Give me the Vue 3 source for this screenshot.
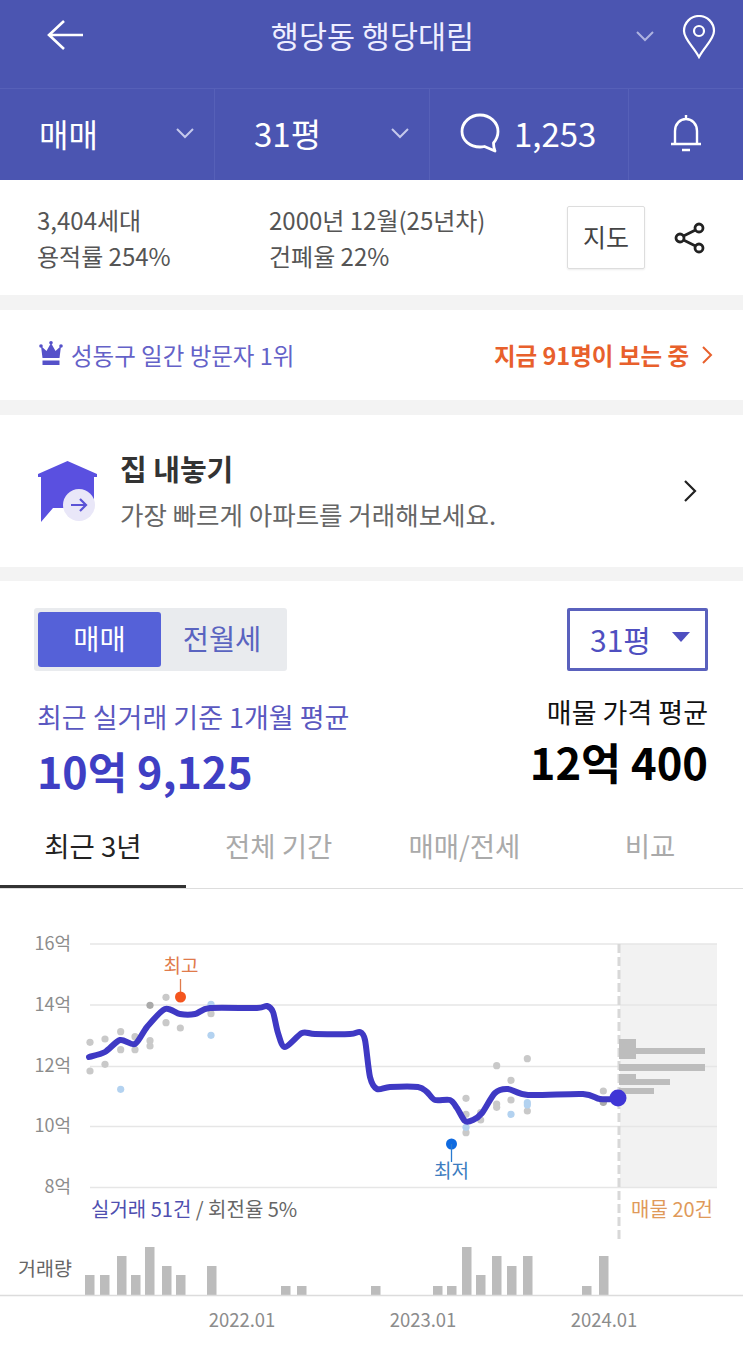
<script setup>
import { computed } from 'vue'

const linePts = [[89,1057],[105,1052],[120,1040],[135,1044],[147,1027],[165,1009],[180,1014],[195,1014],[210,1008],[257,1008],[267,1006],[273,1012],[278,1033],[285,1047],[302,1033],[315,1034],[350,1034],[360,1032],[365,1040],[370,1077],[377,1089],[390,1087],[418,1087],[427,1092],[435,1100],[450,1100],[457,1108],[465,1121],[473,1120],[482,1113],[495,1093],[508,1089],[528,1095],[583,1094],[600,1099],[618,1099]]

const linePath = computed(() => {
  const p = linePts
  let d = `M${p[0][0]} ${p[0][1]}`
  for (let i = 0; i < p.length - 1; i++) {
    const a = p[Math.max(i - 1, 0)], b = p[i], c = p[i + 1], e = p[Math.min(i + 2, p.length - 1)]
    const k = 0.14
    const c1 = [b[0] + (c[0] - a[0]) * k, b[1] + (c[1] - a[1]) * k]
    const c2 = [c[0] - (e[0] - b[0]) * k, c[1] - (e[1] - b[1]) * k]
    d += ` C${c1[0].toFixed(1)} ${c1[1].toFixed(1)} ${c2[0].toFixed(1)} ${c2[1].toFixed(1)} ${c[0]} ${c[1]}`
  }
  return d
})

const l = (x, y) => [x / 3, 920 + y / 3]
const r = (x, y) => [370 + x / 3, 920 + y / 3]
const grayDots = [
  ...[[270,367],[270,453],[315,357],[315,433],[362,335],[362,389],[405,350],[405,389],[450,362],[450,378],[498,232],[498,308],[541,324],[633,281]].map(a => l(...a)),
  ...[[288,535],[288,583],[288,638],[332,578],[332,600],[380,437],[380,552],[380,562],[423,481],[423,540],[472,416],[472,573],[700,513],[700,547]].map(a => r(...a))
]
const darkDots = [l(450,256), r(700,547)]
const blueDots = [
  ...[[362,508],[633,253],[633,346]].map(a => l(...a)),
  ...[[288,622],[423,583],[472,548],[472,555]].map(a => r(...a))
]
const grid = [944, 1005, 1066.5, 1126.5, 1187.5]
const yLabels = [['16억',944],['14억',1005],['12억',1066],['10억',1126],['8억',1187]]
const hist = [[619,1039,17,20],[636,1048,69,6],[619,1064,86,7],[619,1074,17,5],[619,1079,51,6],[619,1088,35,6]]
const vol = [[85,1275],[100,1275],[117,1256],[131,1275],[145,1247],[162,1266],[176,1275],[207,1266],[281,1286],[297,1286],[371,1286],[433,1286],[447,1286],[462,1247],[476,1275],[492,1256],[507,1266],[523,1256],[582,1286],[599,1256]]
const years = [['2022.01',242],['2023.01',423],['2024.01',604]]
const tabs = ['최근 3년', '전체 기간', '매매/전세', '비교']
</script>

<template>
  <div class="page">
    <header class="top">
      <div class="bar1">
        <svg class="back" width="38" height="32" viewBox="0 0 38 32"><path d="M18 2 3 16l15 14M3 16h34" fill="none" stroke="#fff" stroke-width="2.6"/></svg>
        <div class="title">행당동 행당대림</div>
        <svg class="chev-small" width="20" height="12" viewBox="0 0 20 12"><path d="M2 2l8 8 8-8" fill="none" stroke="#aeb3e0" stroke-width="2"/></svg>
        <svg class="pin" width="34" height="44" viewBox="0 0 34 44"><path d="M17 42C11 31 2 24 2 16a15 15 0 0 1 30 0c0 8-9 15-15 26Z" fill="none" stroke="#fff" stroke-width="2.2"/><circle cx="17" cy="16" r="5" fill="none" stroke="#fff" stroke-width="2.2"/></svg>
      </div>
      <div class="bar2">
        <div class="cell c1"><span>매매</span><svg width="20" height="12" viewBox="0 0 20 12"><path d="M2 2l8 8 8-8" fill="none" stroke="#c5c9ec" stroke-width="2"/></svg></div>
        <div class="cell c2"><span>31평</span><svg width="20" height="12" viewBox="0 0 20 12"><path d="M2 2l8 8 8-8" fill="none" stroke="#c5c9ec" stroke-width="2"/></svg></div>
        <div class="cell c3">
          <svg width="40" height="40" viewBox="0 0 40 40"><path d="M20 2C10 2 2 9.500 2 18.500S10 34 20 34c1.500 0 3-.2 4.500-.5L35 38c-1-2.500-1.500-5-1.500-8C36 27 38 23 38 18.500 38 9.500 30 2 20 2Z" fill="none" stroke="#fff" stroke-width="2.800" stroke-linejoin="round"/></svg>
          <span>1,253</span>
        </div>
        <div class="cell c4">
          <svg width="34" height="38" viewBox="0 0 34 38"><path d="M2 30h30M6 30V17C6 10 11 5 17 5s11 5 11 12v13M17 1v4M13 36h8" fill="none" stroke="#fff" stroke-width="2.400"/></svg>
        </div>
      </div>
    </header>

    <section class="info">
      <div class="info-col col-a"><div>3,404세대</div><div>용적률 254%</div></div>
      <div class="info-col col-b"><div>2000년 12월(25년차)</div><div>건폐율 22%</div></div>
      <div class="map-btn">지도</div>
      <svg class="share" width="32" height="32" viewBox="0 0 32 32"><g fill="none" stroke="#222" stroke-width="2.800"><circle cx="25" cy="6" r="4"/><circle cx="6" cy="16" r="4"/><circle cx="25" cy="26" r="4"/><path d="M21.500 8 9.500 14M9.500 18l12 6"/></g></svg>
    </section>

    <section class="rank">
      <svg class="crown" width="24" height="24" viewBox="0 0 24 24"><circle cx="2" cy="5" r="1.800" fill="#5551c9"/><circle cx="12" cy="1.800" r="1.800" fill="#5551c9"/><circle cx="22" cy="5" r="1.800" fill="#5551c9"/><path d="M2 5l5.500 5L12 2l4.500 8L22 5l-1.500 12h-17Z M3.500 19.500h17V24h-17Z" fill="#5551c9"/></svg>
      <span class="rank-text">성동구 일간 방문자 1위</span>
      <span class="now">지금 91명이 보는 중</span>
      <svg width="12" height="20" viewBox="0 0 12 20"><path d="M2 2l8 8-8 8" fill="none" stroke="#e8602c" stroke-width="2"/></svg>
    </section>

    <section class="sell">
      <svg class="house" width="60" height="62" viewBox="0 0 60 62">
        <path d="M29.500 0 59 13v3h-3v24H40v7H15L3 61V16H0v-3Z" fill="#5a50e0"/>
        <circle cx="41" cy="44" r="16" fill="#e9e7f8"/>
        <path d="M33 44h15M42 38l6 6-6 6" fill="none" stroke="#5b53d6" stroke-width="2.200"/>
      </svg>
      <div class="sell-text">
        <div class="sell-title">집 내놓기</div>
        <div class="sell-sub">가장 빠르게 아파트를 거래해보세요.</div>
      </div>
      <svg class="sell-chev" width="14" height="24" viewBox="0 0 14 24"><path d="M2 2l10 10L2 22" fill="none" stroke="#222" stroke-width="2.200"/></svg>
    </section>

    <section class="price">
      <div class="controls">
        <div class="toggle"><div class="tg on">매매</div><div class="tg">전월세</div></div>
        <div class="select"><span>31평</span><i class="tri"></i></div>
      </div>
      <div class="summary">
        <div class="s-left"><div class="s-label">최근 실거래 기준 1개월 평균</div><div class="s-value">10억 9,125</div></div>
        <div class="s-right"><div class="s-label2">매물 가격 평균</div><div class="s-value2">12억 400</div></div>
      </div>
    </section>

    <nav class="tabs">
      <div v-for="(t, i) in tabs" :key="t" class="tab" :class="{ active: i === 0 }">{{ t }}</div>
    </nav>

    <svg class="chart" width="743" height="463" viewBox="0 889 743 463">
      <rect x="620" y="944" width="97" height="244" fill="#f2f2f2"/>
      <line v-for="g in grid" :key="g" x1="90" x2="717" :y1="g" :y2="g" stroke="#e6e6e6" stroke-width="1.300"/>
      <text v-for="y in yLabels" :key="y[0]" x="71" :y="y[1] + 6" text-anchor="end" class="ylab">{{ y[0] }}</text>
      <line x1="619" x2="619" y1="944" y2="1240" stroke="#d8d8d8" stroke-width="3" stroke-dasharray="9 4"/>
      <rect v-for="(h, i) in hist" :key="i" :x="h[0]" :y="h[1]" :width="h[2]" :height="h[3]" fill="#bdbdbd"/>
      <circle v-for="(d, i) in grayDots" :key="'g' + i" :cx="d[0]" :cy="d[1]" r="3.600" fill="#c9c9c9"/>
      <circle v-for="(d, i) in darkDots" :key="'d' + i" :cx="d[0]" :cy="d[1]" r="3.600" fill="#aaaaaa"/>
      <circle v-for="(d, i) in blueDots" :key="'b' + i" :cx="d[0]" :cy="d[1]" r="3.600" fill="#b3d2f0"/>
      <path :d="linePath" fill="none" stroke="#3f39c4" stroke-width="6" stroke-linecap="round" stroke-linejoin="round"/>
      <circle cx="618" cy="1098" r="8.500" fill="#3f35d6"/>
      <text x="181" y="973" text-anchor="middle" class="hi">최고</text>
      <line x1="180.500" x2="180.500" y1="979" y2="997" stroke="#e07b4b" stroke-width="1.300"/>
      <circle cx="180.500" cy="997" r="5.500" fill="#f4551e"/>
      <circle cx="451.500" cy="1144" r="5.500" fill="#0f6ae0"/>
      <line x1="451.500" x2="451.500" y1="1144" y2="1162" stroke="#2a7bd0" stroke-width="1.300"/>
      <text x="451.500" y="1178" text-anchor="middle" class="lo">최저</text>
      <text x="91" y="1217" class="deal"><tspan class="deal-a">실거래 51건</tspan> / 회전율 5%</text>
      <text x="713" y="1217" text-anchor="end" class="listing">매물 20건</text>
      <text x="18" y="1276" class="vol-lab">거래량</text>
      <rect v-for="(v, i) in vol" :key="'v' + i" :x="v[0]" :y="v[1]" width="9.500" :height="1295 - v[1]" fill="#bcbcbc"/>
      <line x1="0" x2="743" y1="1295.500" y2="1295.500" stroke="#dcdcdc" stroke-width="1.500"/>
      <text v-for="y in years" :key="y[0]" :x="y[1]" y="1327" text-anchor="middle" class="year">{{ y[0] }}</text>
    </svg>
  </div>
</template>

<style scoped>
.page { width: 743px; height: 1352px; overflow: hidden; background: #f3f3f3; font-family: "Noto Sans CJK KR", "Noto Sans", sans-serif; color: #333; }
.top { background: #4b55b1; color: #fff; }
.bar1 { height: 88px; display: flex; align-items: center; padding: 0 27px 0 46px; box-sizing: border-box; }
.back { margin-top: -18px; }
.title { flex: 1; text-align: center; font-size: 30.500px; color: #eef; margin-top: -18px; line-height: 40px; transform: translateX(13px); }
.chev-small { margin: -16px 27px 0 0; }
.pin { margin-top: -15px; }
.bar2 { height: 92px; display: flex; border-top: 1px solid #5660b8; box-sizing: border-box; }
.cell { height: 100%; display: flex; align-items: center; border-right: 1px solid #5660b8; box-sizing: border-box; font-size: 33px; }
.c1 { width: 215px; padding: 0 19px 0 39px; justify-content: space-between; }
.c1 span { font-size: 32px; }
.c2 { width: 215px; padding: 0 19px 0 39px; justify-content: space-between; }
.c3 { width: 199px; padding-left: 30px; gap: 14px; }
.c4 { flex: 1; border-right: 0; justify-content: center; }
.cell span { margin-top: -4px; }
.cell svg { margin-top: -4px; }
.info { height: 115px; background: #fff; display: flex; align-items: center; padding: 0 37px; box-sizing: border-box; font-size: 24px; color: #555; position: relative; }
.info-col { line-height: 36px; }
.col-a { width: 232px; }
.col-b { width: 298px; }
.map-btn { width: 78px; height: 63px; border: 1px solid #ddd; border-radius: 2px; box-sizing: border-box; display: flex; align-items: center; justify-content: center; font-size: 25px; color: #444; box-shadow: 0 1px 2px rgba(0,0,0,.08); padding-bottom: 4px; }
.share { margin-left: 29px; }
.rank { margin-top: 15px; height: 90px; background: #fff; display: flex; align-items: center; padding: 0 30px 0 39px; box-sizing: border-box; }
.crown { margin-top: -4px; }
.rank-text { margin-left: 8px; flex: 1; font-size: 23.5px; color: #6462c8; }
.now { font-size: 23.5px; font-weight: 700; color: #e8602c; margin-right: 12px; }
.sell { margin-top: 15px; height: 152px; background: #fff; display: flex; align-items: center; padding: 0 46px 0 38px; box-sizing: border-box; }
.house { flex: none; margin-top: 2px; }
.sell-text { flex: 1; margin-left: 22px; }
.sell-title { font-size: 29px; font-weight: 700; color: #333; line-height: 36px; margin-top: -1px; }
.sell-sub { font-size: 25.500px; color: #666; line-height: 34px; margin-top: 11px; }
.price { margin-top: 14px; background: #fff; padding: 27px 35px 0 34px; height: 239px; box-sizing: border-box; }
.controls { display: flex; justify-content: space-between; }
.toggle { width: 253px; height: 63px; background: #e9ebee; border-radius: 3px; padding: 4px; box-sizing: border-box; display: flex; }
.tg { width: 123px; display: flex; align-items: center; justify-content: center; font-size: 28.500px; color: #5a64c0; border-radius: 3px; padding-bottom: 4px; box-sizing: border-box; }
.tg + .tg { width: 122px; }
.tg.on { background: #5561d8; color: #fff; }
.select { width: 141px; height: 63px; border: 3px solid #5a61bd; border-radius: 2px; box-sizing: border-box; display: flex; align-items: center; padding-left: 20px; font-size: 30px; color: #4f4fc0; }
.tri { margin: -6px 0 0 21px; width: 0; height: 0; border-left: 9px solid transparent; border-right: 9px solid transparent; border-top: 10px solid #4f4fc0; }
.select span { margin-top: -2px; }
.summary { display: flex; justify-content: space-between; }
.s-left { padding-left: 3px; }
.s-label { font-size: 27px; line-height: 34px; color: #5a58c0; margin-top: 29px; }
.s-value { font-size: 43px; line-height: 56px; font-weight: 700; color: #3f3fc4; margin-top: 8px; }
.s-right { text-align: right; }
.s-label2 { font-size: 27px; line-height: 34px; color: #111; margin-top: 24px; }
.s-value2 { font-size: 43.500px; line-height: 56px; font-weight: 700; color: #000; margin-top: 5px; }
.tabs { background: #fff; display: flex; height: 68px; border-bottom: 1px solid #ddd; box-sizing: content-box; }
.tab { width: 186.500px; box-sizing: border-box; text-align: center; font-size: 27.500px; color: #aaa; padding-top: 6px; line-height: 38px; }
.tab.active { color: #222; border-bottom: 3px solid #333; height: 68px; }
.chart { display: block; background: #fff; }
.ylab { font-size: 18px; fill: #8c8c8c; }
.hi { font-size: 19px; fill: #e07b4b; }
.lo { font-size: 19px; fill: #3d7cc0; }
.deal { font-size: 20px; fill: #666; }
.deal-a { fill: #4f4fb0; }
.listing { font-size: 20px; fill: #df9a5a; }
.vol-lab { font-size: 19.500px; fill: #666; }
.year { font-size: 18.500px; fill: #8c8c8c; }
</style>
